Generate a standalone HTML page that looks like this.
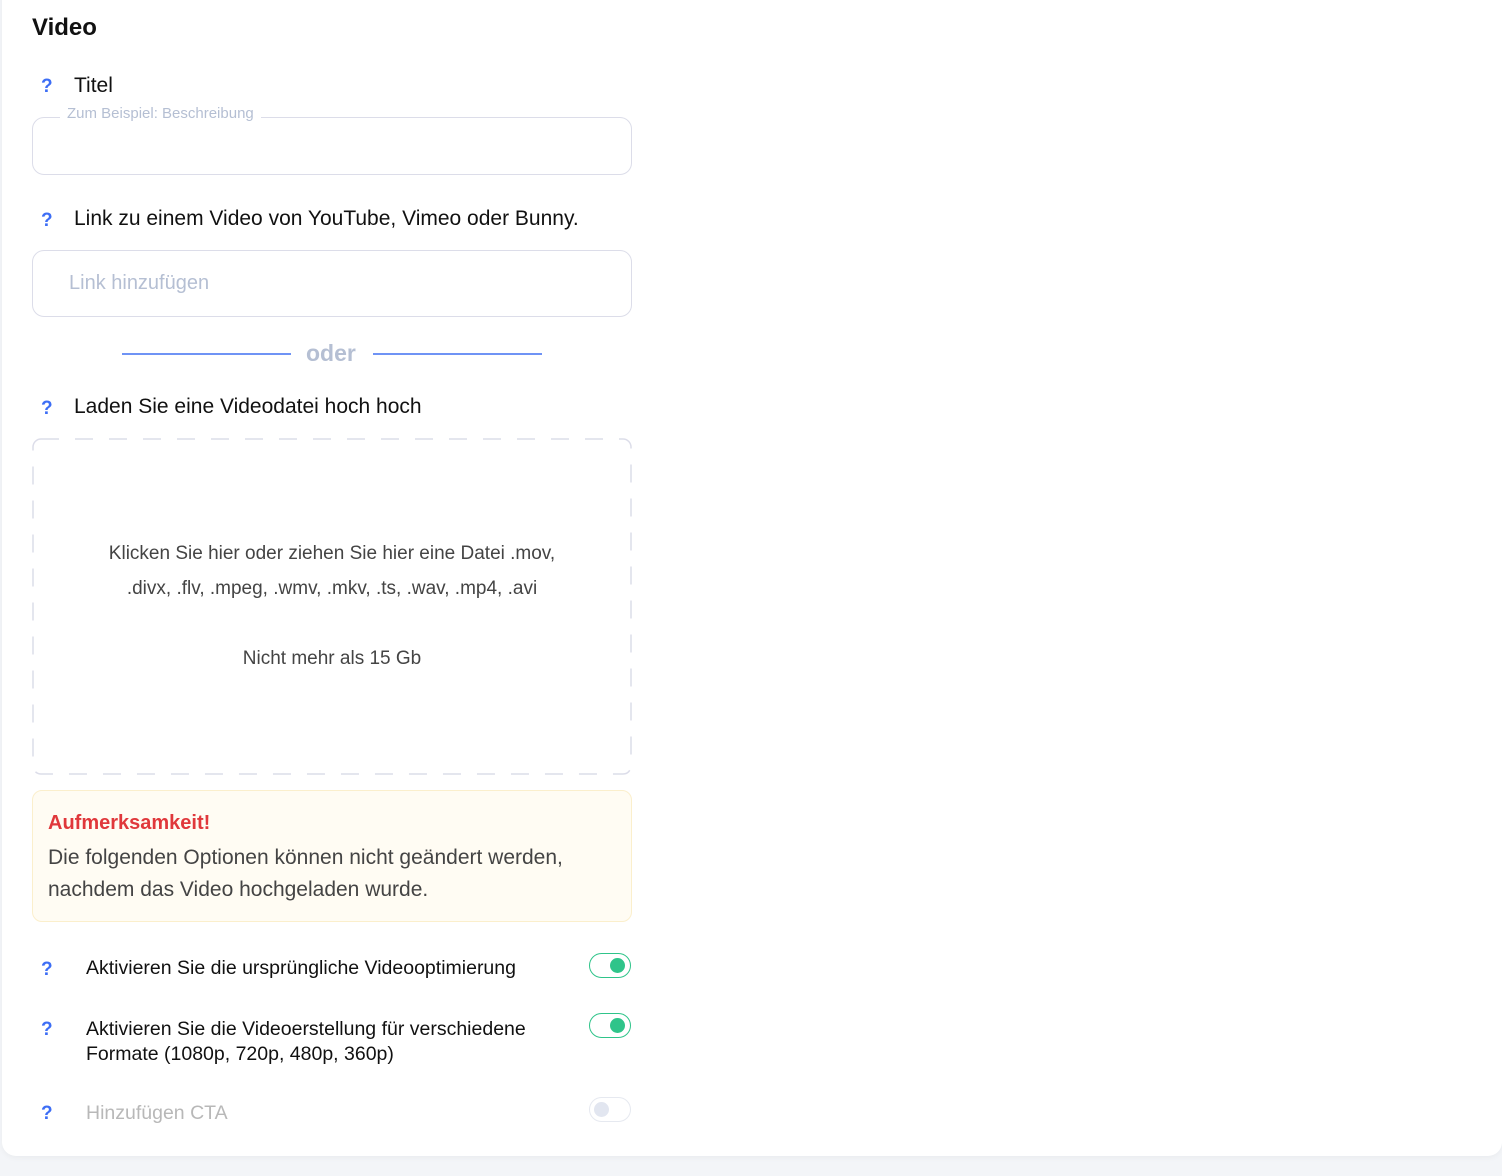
<!DOCTYPE html>
<html><head><meta charset="utf-8"><style>
body{margin:0;width:1502px;height:1176px;background:#f3f5f8;font-family:"Liberation Sans",sans-serif;position:relative;overflow:hidden}
.card{position:absolute;left:2px;top:-20px;width:1500px;height:1176px;background:#fff;border-radius:14px;box-shadow:0 2px 6px rgba(0,0,0,.04)}
.a{position:absolute;white-space:nowrap}
.q{position:absolute;color:#3d6ef5;font-weight:bold;font-size:19px}
.lbl{font-size:21px;color:#111}
.inp{position:absolute;left:32px;width:598px;border:1px solid #dcdde9;border-radius:12px}
.tg{position:absolute;left:589px;width:40px;height:23px;border:1.5px solid #2fc48a;border-radius:13px}
.tg i{position:absolute;right:5px;top:4px;width:15px;height:15px;border-radius:50%;background:#2fc48a}
</style></head><body>
<div class="card"></div>
<div class="a" style="left:32px;top:14px;font-size:24px;font-weight:bold;color:#111">Video</div>

<div class="q" style="left:41px;top:76px">?</div>
<div class="a lbl" style="left:74px;top:74px">Titel</div>
<div class="inp" style="top:117px;height:56px"></div>
<div class="a" style="left:60px;top:105px;background:#fff;padding:0 7px;font-size:15px;color:#b5bfd3">Zum Beispiel: Beschreibung</div>

<div class="q" style="left:41px;top:210px">?</div>
<div class="a lbl" style="left:74px;top:207px">Link zu einem Video von YouTube, Vimeo oder Bunny.</div>
<div class="inp" style="top:250px;height:65px"></div>
<div class="a" style="left:69px;top:272px;font-size:20px;color:#b5bfd3">Link hinzufügen</div>

<div class="a" style="left:122px;top:353px;width:169px;height:1.5px;background:#6f93f5"></div>
<div class="a" style="left:373px;top:353px;width:169px;height:1.5px;background:#6f93f5"></div>
<div class="a" style="left:306px;top:340px;font-size:23px;font-weight:bold;color:#b5bfd3">oder</div>

<div class="q" style="left:41px;top:398px">?</div>
<div class="a lbl" style="left:74px;top:395px">Laden Sie eine Videodatei hoch hoch</div>

<svg class="a" style="left:32px;top:438px" width="600" height="337"><rect x="1" y="1" width="598" height="335" rx="8" fill="none" stroke="#dcdde9" stroke-width="1.5" stroke-dasharray="18 16"/></svg>
<div class="a" style="left:32px;top:536px;width:600px;text-align:center;font-size:19px;color:#444;line-height:35px">Klicken Sie hier oder ziehen Sie hier eine Datei .mov,<br>.divx, .flv, .mpeg, .wmv, .mkv, .ts, .wav, .mp4, .avi<br><br>Nicht mehr als 15 Gb</div>

<div class="a" style="left:32px;top:790px;width:598px;height:130px;background:#fffcf3;border:1px solid #fbefcc;border-radius:10px"></div>
<div class="a" style="left:48px;top:812px;font-size:20px;font-weight:bold;color:#e0383b">Aufmerksamkeit!</div>
<div class="a" style="left:48px;top:842px;font-size:21px;color:#444;line-height:32px">Die folgenden Optionen können nicht geändert werden,<br>nachdem das Video hochgeladen wurde.</div>

<div class="q" style="left:41px;top:959px">?</div>
<div class="a" style="left:86px;top:957px;font-size:19.5px;color:#111">Aktivieren Sie die ursprüngliche Videooptimierung</div>
<div class="tg" style="top:953px"><i></i></div>

<div class="q" style="left:41px;top:1019px">?</div>
<div class="a" style="left:86px;top:1017px;font-size:19.5px;color:#111;line-height:25px">Aktivieren Sie die Videoerstellung für verschiedene<br>Formate (1080p, 720p, 480p, 360p)</div>
<div class="tg" style="top:1013px"><i></i></div>

<div class="q" style="left:41px;top:1103px">?</div>
<div class="a" style="left:86px;top:1102px;font-size:19.5px;color:#b8b8b8">Hinzufügen CTA</div>
<div class="tg" style="top:1097px;border-color:#e6e9f0"><i style="left:4px;right:auto;background:#e2e6f0"></i></div>
</body></html>
